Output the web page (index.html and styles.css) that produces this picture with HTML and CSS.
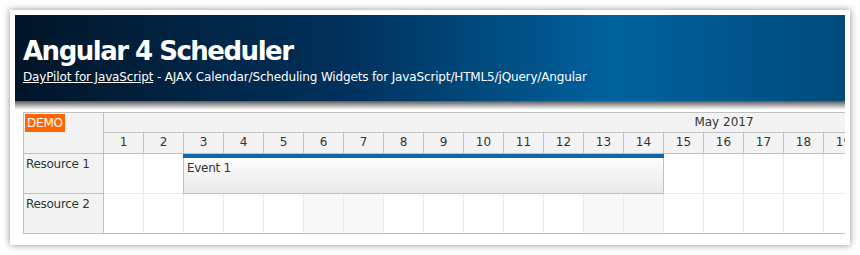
FILE: index.html
```html
<!DOCTYPE html>
<html>
<head>
<meta charset="utf-8">
<title>Angular 4 Scheduler</title>
<link rel="stylesheet" href="styles.css">
</head>
<body>
<div class="card">
  <div class="header">
    <h1 class="title">Angular 4 Scheduler</h1>
    <div class="subtitle"><a href="#" class="link">DayPilot for JavaScript</a> - AJAX Calendar/Scheduling Widgets for JavaScript/HTML5/jQuery/Angular</div>
  </div>
  <div class="header-shadow"></div>
  <div class="main">
    <div class="sched">
      <div class="rows">
        <div class="corner"><span class="demo">DEMO</span></div>
        <div class="rh">Resource 1</div>
        <div class="rh">Resource 2</div>
      </div>
      <div class="timeline">
        <div class="month">May 2017</div>
        <div class="days">
          <div class="day">1</div><div class="day">2</div><div class="day">3</div><div class="day">4</div><div class="day">5</div><div class="day">6</div><div class="day">7</div><div class="day">8</div><div class="day">9</div><div class="day">10</div><div class="day">11</div><div class="day">12</div><div class="day">13</div><div class="day">14</div><div class="day">15</div><div class="day">16</div><div class="day">17</div><div class="day">18</div><div class="day">19</div><div class="day">20</div>
        </div>
        <div class="grow">
          <div class="cell"></div><div class="cell"></div><div class="cell"></div><div class="cell"></div><div class="cell"></div><div class="cell we"></div><div class="cell we"></div><div class="cell"></div><div class="cell"></div><div class="cell"></div><div class="cell"></div><div class="cell"></div><div class="cell we"></div><div class="cell we"></div><div class="cell"></div><div class="cell"></div><div class="cell"></div><div class="cell"></div><div class="cell"></div><div class="cell we"></div>
          <div class="event"><div class="event-bar"></div><div class="event-text">Event 1</div></div>
        </div>
        <div class="grow last">
          <div class="cell"></div><div class="cell"></div><div class="cell"></div><div class="cell"></div><div class="cell"></div><div class="cell we"></div><div class="cell we"></div><div class="cell"></div><div class="cell"></div><div class="cell"></div><div class="cell"></div><div class="cell"></div><div class="cell we"></div><div class="cell we"></div><div class="cell"></div><div class="cell"></div><div class="cell"></div><div class="cell"></div><div class="cell"></div><div class="cell we"></div>
        </div>
      </div>
    </div>
  </div>
</div>
</body>
</html>
```
FILE: styles.css
```css
* { box-sizing: border-box; }
html, body { margin: 0; padding: 0; background: #fff; }
body { font-family: "DejaVu Sans", sans-serif; }

.card {
  margin: 10px;
  width: 840px;
  height: 235px;
  padding: 5px;
  background: #fff;
  box-shadow: 0 0 7px rgba(0,0,0,0.45);
}

.header {
  height: 86px;
  padding: 21px 0 0 8px;
  background: linear-gradient(to right, #021528 0%, #00315c 40%, #00629f 72%, #004b7c 100%);
  color: #fff;
}
.title {
  margin: 0;
  font-size: 26px;
  line-height: 30px;
  font-weight: bold;
  letter-spacing: -1.5px;
}
.subtitle {
  font-size: 12px;
  line-height: 16px;
  margin-top: 3px;
  letter-spacing: -0.15px;
}
.link { color: #fff; text-decoration: underline; }

.header-shadow {
  height: 9px;
  background: linear-gradient(#5a5a5a, #e6e6e6 80%, #fff);
}

.main {
  padding: 2px 0 0 8px;
  overflow: hidden;
  width: 830px;
}

.sched {
  display: flex;
  width: max-content;
  border-top: 1px solid #c0c0c0;
  border-left: 1px solid #c0c0c0;
  font-size: 12px;
  color: #333;
}

.rows { width: 80px; background: #f3f3f3; border-right: 1px solid #c0c0c0; }
.corner { height: 41px; border-bottom: 1px solid #c0c0c0; padding: 1px 0 0 1px; }
.demo {
  display: inline-block;
  background: #ff6600;
  color: #fff;
  font-size: 12px;
  line-height: 18px;
  padding: 0 2px;
  letter-spacing: -0.2px;
}
.rh { height: 40px; border-bottom: 1px solid #c0c0c0; padding: 3px 0 0 2px; letter-spacing: -0.3px; }

.timeline { width: 1240px; }
.month {
  height: 20px;
  background: #f3f3f3;
  border-bottom: 1px solid #c0c0c0;
  text-align: center;
  line-height: 18px;
}
.days { display: flex; height: 21px; border-bottom: 1px solid #c0c0c0; background: #f3f3f3; }
.day {
  width: 40px;
  flex: none;
  border-right: 1px solid #c0c0c0;
  text-align: center;
  line-height: 19px;
}
.grow { display: flex; height: 40px; border-bottom: 1px solid #e9e9e9; position: relative; }
.grow.last { border-bottom-color: #c0c0c0; }
.cell { width: 40px; flex: none; border-right: 1px solid #ebebeb; background: #fff; }
.cell.we { background: #f8f8f8; }

.event {
  position: absolute;
  left: 79px;
  top: 0;
  width: 481px;
  height: 40px;
  border: 1px solid #c0c0c0;
  border-top: none;
  background: linear-gradient(#fff, #e9e9e9);
}
.event-bar { height: 4px; margin-left: -1px; margin-right: -1px; background: #1066a8; }
.event-text { padding: 3px 0 0 3px; letter-spacing: -0.3px; }
```
